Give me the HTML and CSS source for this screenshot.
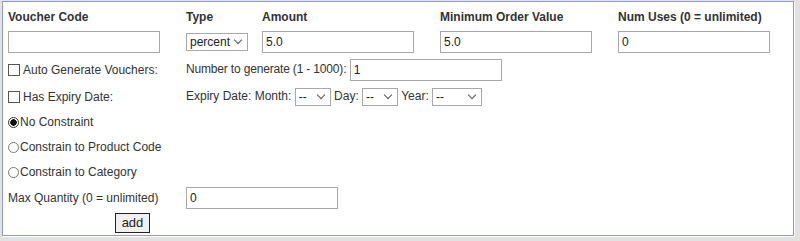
FILE: index.html
```html
<!DOCTYPE html>
<html lang="en">
  <head>
    <meta charset="UTF-8" />
    <title>Vouchers</title>
    <link rel="stylesheet" href="styles.css">
  </head>
  <body>
    <div class="frame">
      <form class="panel voucher-form">
        <div class="head">Voucher Code</div>
        <div class="head">Type</div>
        <div class="head">Amount</div>
        <div class="head">Minimum Order Value</div>
        <div class="head">Num Uses (0 = unlimited)</div>

        <div><input type="text" class="field" value="" /></div>
        <div>
          <span class="pick-wrap">
            <select class="pick type-pick">
              <option>percent</option>
              <option>fixed</option>
            </select>
          </span>
        </div>
        <div><input type="text" class="field" value="5.0" /></div>
        <div><input type="text" class="field" value="5.0" /></div>
        <div><input type="text" class="field" value="0" /></div>

        <label class="check"><input type="checkbox" class="box" /> Auto Generate Vouchers:</label>
        <div class="wide"><span class="gen-label">Number to generate (1 - 1000):</span> <input type="text" class="field" value="1" /></div>

        <label class="check"><input type="checkbox" class="box" /> Has Expiry Date:</label>
        <div class="wide">
          Expiry Date: Month:
          <span class="pick-wrap"><select class="pick small"><option>--</option></select></span>
          Day:
          <span class="pick-wrap"><select class="pick small"><option>--</option></select></span>
          Year:
          <span class="pick-wrap"><select class="pick year"><option>--</option></select></span>
        </div>

        <label class="radio-row"><input type="radio" name="constraint" class="dot" checked />No Constraint</label>
        <label class="radio-row"><input type="radio" name="constraint" class="dot" />Constrain to Product Code</label>
        <label class="radio-row"><input type="radio" name="constraint" class="dot" />Constrain to Category</label>

        <div class="first">Max Quantity (0 = unlimited)</div>
        <div class="wide"><input type="text" class="field" value="0" /></div>

        <div class="submit-cell"><button type="button" class="add-btn">add</button></div>
      </form>
    </div>
  </body>
</html>
```

FILE: styles.css
```css
body {
  margin: 0;
  padding: 0;
  background: #fff;
  font-family: "Liberation Sans", Arial, sans-serif;
  font-size: 12px;
  color: #333;
}

.frame {
  width: 800px;
  height: 241px;
  box-sizing: border-box;
  background: #e2e2e2;
  padding: 1px 6px 5px 2px;
}

.panel {
  height: 100%;
  box-sizing: border-box;
  background: #fff;
  border: 1px solid #8e9ad0;
  box-shadow: 1px 1px 0 #fff;
  padding: 4px 5px 0 5px;
}

.voucher-form {
  display: grid;
  grid-template-columns: 178px 76px 178px 178px 1fr;
  grid-template-rows: 21px 29px 28px 25px 26px 24px 26px 26px 23px;
  align-items: center;
}

.head {
  font-weight: bold;
  color: #333;
}

.field {
  width: 152px;
  height: 22px;
  box-sizing: border-box;
  border: 1px solid #a9a9a9;
  padding: 0 3px;
  margin: 0;
  font-family: "Liberation Sans", Arial, sans-serif;
  font-size: 12px;
  color: #222;
  vertical-align: middle;
}

.gen-label {
  letter-spacing: -0.17px;
}

.pick-wrap {
  position: relative;
  display: inline-block;
  vertical-align: middle;
}

/* chevron drawn over the select */
.pick-wrap::after {
  content: "";
  position: absolute;
  right: 7px;
  top: 4px;
  width: 5px;
  height: 5px;
  border-right: 1px solid #555;
  border-bottom: 1px solid #555;
  transform: rotate(45deg);
  pointer-events: none;
}

.pick {
  appearance: none;
  display: block;
  height: 18px;
  box-sizing: border-box;
  border: 1px solid #a9a9a9;
  border-radius: 0;
  background: #fff;
  padding: 0 0 0 3px;
  margin: 0;
  font-family: "Liberation Sans", Arial, sans-serif;
  font-size: 12px;
  color: #222;
}

.type-pick {
  width: 62px;
}

.small {
  width: 36px;
}

.year {
  width: 50px;
}

.check,
.radio-row,
.first {
  grid-column: 1;
  display: flex;
  align-items: center;
  white-space: nowrap;
}

.wide {
  grid-column: 2 / 6;
  white-space: nowrap;
}

.box {
  appearance: none;
  width: 12px;
  height: 12px;
  margin: 0 3px 0 0;
  border: 1px solid #555;
  background: #fff;
}

.dot {
  appearance: none;
  width: 11px;
  height: 11px;
  margin: 0 1px 0 0;
  border: 1px solid #777;
  border-radius: 50%;
  background: #fff;
}

.dot:checked {
  border-color: #333;
  background: radial-gradient(circle, #111 0 3px, #fff 3.5px);
}

.submit-cell {
  grid-column: 1 / 3;
  justify-self: start;
  margin-left: 107px;
}

.add-btn {
  width: 35px;
  height: 20px;
  padding: 0;
  border: 1px solid #222;
  border-radius: 0;
  background: #f0f0f0;
  font-family: "Liberation Sans", Arial, sans-serif;
  font-size: 13px;
  color: #222;
}
```
